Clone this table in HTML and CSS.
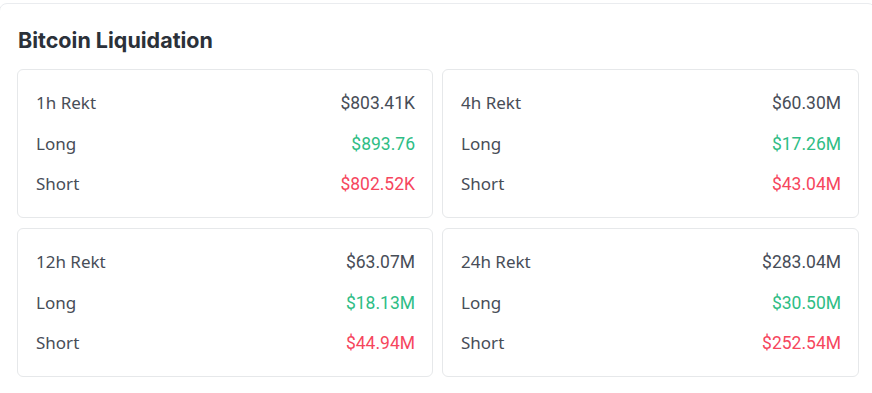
FILE: index.html
```html
<!DOCTYPE html>
<html lang="en">
<head>
<meta charset="utf-8">
<title>Bitcoin Liquidation</title>
<link rel="stylesheet" href="styles.css">
</head>
<body>
<section class="panel">
  <h2 class="title">Bitcoin Liquidation</h2>
  <div class="grid">
    <div class="card">
      <div class="row"><span class="label">1h Rekt</span><span class="value">$803.41K</span></div>
      <div class="row"><span class="label">Long</span><span class="value up">$893.76</span></div>
      <div class="row"><span class="label">Short</span><span class="value down">$802.52K</span></div>
    </div>
    <div class="card">
      <div class="row"><span class="label">4h Rekt</span><span class="value">$60.30M</span></div>
      <div class="row"><span class="label">Long</span><span class="value up">$17.26M</span></div>
      <div class="row"><span class="label">Short</span><span class="value down">$43.04M</span></div>
    </div>
    <div class="card">
      <div class="row"><span class="label">12h Rekt</span><span class="value">$63.07M</span></div>
      <div class="row"><span class="label">Long</span><span class="value up">$18.13M</span></div>
      <div class="row"><span class="label">Short</span><span class="value down">$44.94M</span></div>
    </div>
    <div class="card">
      <div class="row"><span class="label">24h Rekt</span><span class="value">$283.04M</span></div>
      <div class="row"><span class="label">Long</span><span class="value up">$30.50M</span></div>
      <div class="row"><span class="label">Short</span><span class="value down">$252.54M</span></div>
    </div>
  </div>
</section>
</body>
</html>
```
FILE: styles.css
```css
html, body {
  margin: 0;
  padding: 0;
  background: #ffffff;
  overflow: hidden;
}
body {
  font-family: "Inter", "Roboto", "Noto Sans", sans-serif;
  color: #1e2329;
}
.panel {
  box-sizing: border-box;
  width: 877px;
  margin-top: 3px;
  margin-left: -1px;
  border: 1px solid #eaecef;
  border-radius: 8px;
  padding: 22px 16px 24px 17px;
}
.title {
  margin: 0 0 15px 1px;
  font-size: 21.5px;
  line-height: 28px;
  font-weight: 700;
  color: #2b3139;
}
.grid {
  display: grid;
  grid-template-columns: 416px 1fr;
  gap: 9px;
}
.card {
  border: 1px solid #e6e8ea;
  border-radius: 6px;
  padding: 21px 17px 21px 18px;
  display: flex;
  flex-direction: column;
  gap: 16.5px;
}
.grid .card:nth-child(n+3) {
  margin-top: 1px;
}
.row {
  display: flex;
  justify-content: space-between;
  align-items: center;
  height: 24px;
  line-height: 24px;
}
.label {
  color: #474d57;
  font-family: "Noto Sans", "Inter", sans-serif;
  font-size: 17px;
}
.value {
  color: #474d57;
  font-family: "Roboto", "Inter", sans-serif;
  font-size: 17.5px;
}
.value.up { color: #2ebd85; }
.value.down { color: #f6465d; }
```
